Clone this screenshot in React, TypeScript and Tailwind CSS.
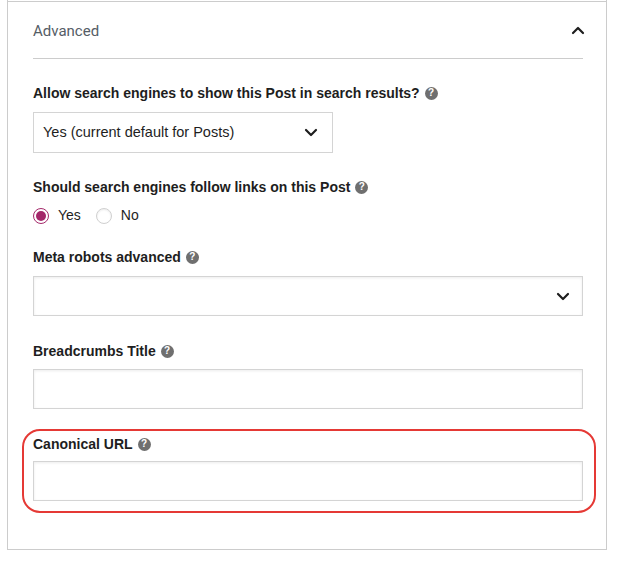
import React from 'react';

const sans = "font-['Liberation_Sans',Arial,sans-serif]";

function Help() {
  return (
    <span className="ml-[5px] inline-flex h-[13px] w-[13px] -translate-y-[1px] items-center justify-center rounded-full bg-[#6f6f6f] align-middle text-[10px] font-bold leading-none text-white">
      ?
    </span>
  );
}

function Chevron({ up = false }: { up?: boolean }) {
  return (
    <svg width="14" height="9" viewBox="0 0 14 9" className={up ? 'rotate-180' : ''}>
      <path d="M2 2l5 5 5-5" fill="none" stroke="#1e1e1e" strokeWidth="2.2" strokeLinecap="round" strokeLinejoin="round" />
    </svg>
  );
}

function Label({ children }: { children: React.ReactNode }) {
  return <div className="text-[14px] font-bold leading-[20px] text-[#1e1e1e]">{children}</div>;
}

function Field({ className = '' }: { className?: string }) {
  return (
    <div
      className={`h-[40px] border border-[#d4d4d4] bg-white shadow-[inset_0_1px_3px_rgba(0,0,0,0.08)] ${className}`}
    />
  );
}

export default function App() {
  return (
    <div className={`h-[564px] w-[632px] bg-white ${sans}`}>
      <div className="ml-[7px] flex h-[550px] w-[600px] flex-col border border-t-0 border-[#cccccc] pt-[1px]">
        <div className="border-t border-[#cccccc]" />
        <div className="ml-[25px] mr-[23px] flex h-[57px] items-center justify-between border-b border-[#cccccc] pt-[3px]">
          <span className="font-['Roboto',sans-serif] text-[15px] text-[#555d66]">Advanced</span>
          <span className="mr-[-2px] mt-[-2px]">
            <Chevron up />
          </span>
        </div>

        <div className="ml-[25px] mr-[23px] mt-[24px]">
          <Label>
            Allow search engines to show this Post in search results?
            <Help />
          </Label>
          <div className="mt-[9px] flex h-[41px] w-[300px] items-center justify-between border border-[#d4d4d4] bg-white pl-[9px] pr-[14px] text-[14.5px] text-[#1e1e1e]">
            <span>Yes (current default for Posts)</span>
            <Chevron />
          </div>

          <div className="mt-[24px]">
            <Label>
              Should search engines follow links on this Post
              <Help />
            </Label>
          </div>
          <div className="mt-[8px] flex items-center text-[14px] text-[#1e1e1e]">
            <span className="flex h-[16px] w-[16px] items-center justify-center rounded-full border border-[#a4286a] bg-white">
              <span className="h-[10px] w-[10px] rounded-full bg-[#a4286a]" />
            </span>
            <span className="ml-[9px]">Yes</span>
            <span className="ml-[15px] h-[16px] w-[16px] rounded-full border border-[#d0d0d0] bg-white shadow-[inset_0_1px_2px_rgba(0,0,0,0.08)]" />
            <span className="ml-[9px]">No</span>
          </div>

          <div className="mt-[21px]">
            <Label>
              Meta robots advanced
              <Help />
            </Label>
          </div>
          <div className="mt-[9px] flex h-[40px] items-center justify-end border border-[#d4d4d4] bg-white pr-[12px] shadow-[inset_0_1px_3px_rgba(0,0,0,0.08)]">
            <Chevron />
          </div>

          <div className="mt-[25px]">
            <Label>
              Breadcrumbs Title
              <Help />
            </Label>
          </div>
          <Field className="mt-[8px]" />
        </div>

        <div className="ml-[14px] mr-[10px] mt-[20px] rounded-[18px] border-2 border-[#e53935] pb-[10px] pl-[9px] pr-[11px] pt-[3px]">
          <Label>
            Canonical URL
            <Help />
          </Label>
          <Field className="mt-[7px]" />
        </div>
      </div>
    </div>
  );
}
